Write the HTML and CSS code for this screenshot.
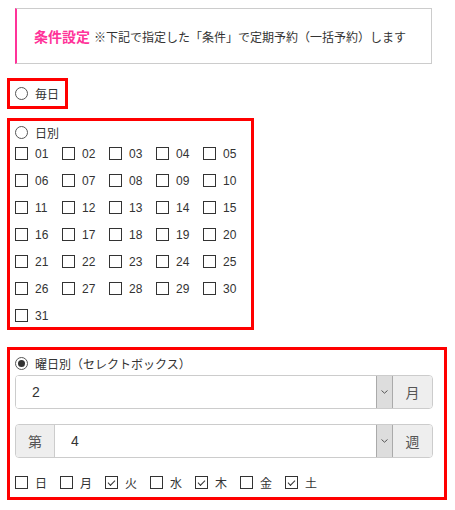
FILE: index.html
```html
<!DOCTYPE html>
<html lang="ja">
<head>
    <meta charset="UTF-8">
    <meta name="viewport" content="width=device-width, initial-scale=1.0">
    <title>条件設定</title>
    <link rel="stylesheet" href="styles.css">
</head>
<body>
    <div class="info-box">
        <span class="info-title">条件設定</span>
        <span class="info-text">※下記で指定した「条件」で定期予約（一括予約）します</span>
    </div>

    <div class="frame frame-daily">
        <label class="radio-line"><input type="radio" name="mode"> 毎日</label>
    </div>

    <div class="frame frame-days">
        <label class="radio-line"><input type="radio" name="mode"> 日別</label>
        <div class="day-grid">
            <label class="check"><input type="checkbox">01</label>
            <label class="check"><input type="checkbox">02</label>
            <label class="check"><input type="checkbox">03</label>
            <label class="check"><input type="checkbox">04</label>
            <label class="check"><input type="checkbox">05</label>
            <label class="check"><input type="checkbox">06</label>
            <label class="check"><input type="checkbox">07</label>
            <label class="check"><input type="checkbox">08</label>
            <label class="check"><input type="checkbox">09</label>
            <label class="check"><input type="checkbox">10</label>
            <label class="check"><input type="checkbox">11</label>
            <label class="check"><input type="checkbox">12</label>
            <label class="check"><input type="checkbox">13</label>
            <label class="check"><input type="checkbox">14</label>
            <label class="check"><input type="checkbox">15</label>
            <label class="check"><input type="checkbox">16</label>
            <label class="check"><input type="checkbox">17</label>
            <label class="check"><input type="checkbox">18</label>
            <label class="check"><input type="checkbox">19</label>
            <label class="check"><input type="checkbox">20</label>
            <label class="check"><input type="checkbox">21</label>
            <label class="check"><input type="checkbox">22</label>
            <label class="check"><input type="checkbox">23</label>
            <label class="check"><input type="checkbox">24</label>
            <label class="check"><input type="checkbox">25</label>
            <label class="check"><input type="checkbox">26</label>
            <label class="check"><input type="checkbox">27</label>
            <label class="check"><input type="checkbox">28</label>
            <label class="check"><input type="checkbox">29</label>
            <label class="check"><input type="checkbox">30</label>
            <label class="check"><input type="checkbox">31</label>
        </div>
    </div>

    <div class="frame frame-week">
        <label class="radio-line"><input type="radio" name="mode" checked> 曜日別（セレクトボックス）</label>

        <div class="input-group first">
            <div class="select-box">
                <select><option>2</option></select>
                <span class="arrow"><svg width="7" height="4" viewBox="0 0 7 4"><path d="M0.5 0.5 L3.5 3.2 L6.5 0.5" fill="none" stroke="#555" stroke-width="1"/></svg></span>
            </div>
            <span class="addon addon-right">月</span>
        </div>

        <div class="input-group second">
            <span class="addon addon-left">第</span>
            <div class="select-box">
                <select><option>4</option></select>
                <span class="arrow"><svg width="7" height="4" viewBox="0 0 7 4"><path d="M0.5 0.5 L3.5 3.2 L6.5 0.5" fill="none" stroke="#555" stroke-width="1"/></svg></span>
            </div>
            <span class="addon addon-right">週</span>
        </div>

        <div class="week-row">
            <label class="check week"><input type="checkbox">日</label>
            <label class="check week"><input type="checkbox">月</label>
            <label class="check week"><input type="checkbox" checked>火</label>
            <label class="check week"><input type="checkbox">水</label>
            <label class="check week"><input type="checkbox" checked>木</label>
            <label class="check week"><input type="checkbox">金</label>
            <label class="check week"><input type="checkbox" checked>土</label>
        </div>
    </div>
</body>
</html>
```

FILE: styles.css
```css
body {
    margin: 0;
    padding: 8px 8px 0 7px;
    font-family: "Liberation Sans", "Noto Sans CJK JP", sans-serif;
    font-size: 12px;
    color: #333;
    background: #fff;
}
.info-box {
    margin-left: 8px;
    width: 397px;
    height: 54px;
    border: 1px solid #ccc;
    border-left: 2px solid #f39;
    padding-left: 17px;
    display: flex;
    align-items: center;
    gap: 4px;
    margin-bottom: 14px;
}
.info-title {
    color: #f39;
    font-weight: bold;
    font-size: 14px;
}
.info-text {
    font-size: 12px;
    color: #333;
}
.frame {
    border: 3px solid #f00;
    box-sizing: border-box;
}
.frame-daily {
    width: 61px;
    height: 31px;
    padding: 0 5px;
    display: flex;
    align-items: center;
    margin-bottom: 9px;
}
.frame-days {
    width: 247px;
    height: 212px;
    padding: 2px 5px 5px;
    margin-bottom: 17px;
}
.frame-week {
    width: 440px;
    height: 153px;
    padding: 4px 11px 8px 5px;
}
.radio-line {
    display: flex;
    align-items: center;
    height: 18px;
    gap: 7px;
    font-size: 12px;
}
input[type="radio"] {
    appearance: none;
    margin: 0;
    width: 13px;
    height: 13px;
    border: 1px solid #555;
    border-radius: 50%;
    box-sizing: border-box;
    position: relative;
    background: #fff;
}
input[type="radio"]:checked::after {
    content: "";
    position: absolute;
    left: 2px;
    top: 2px;
    width: 7px;
    height: 7px;
    border-radius: 50%;
    background: #333;
}
.day-grid {
    margin-top: 6px;
    display: grid;
    grid-template-columns: repeat(5, 47px);
    grid-auto-rows: 13px;
    row-gap: 14px;
}
.check {
    display: flex;
    align-items: center;
    gap: 7px;
    height: 13px;
    font-size: 12px;
}
input[type="checkbox"] {
    appearance: none;
    margin: 0;
    width: 13px;
    height: 13px;
    border: 1px solid #333;
    box-sizing: border-box;
    background: #fff;
    position: relative;
    flex: none;
}
input[type="checkbox"]:checked::after {
    content: "";
    position: absolute;
    left: 2px;
    top: 1px;
    width: 6px;
    height: 3px;
    border-left: 1px solid #333;
    border-bottom: 1px solid #333;
    transform: translate(0, 2px) rotate(-45deg);
}
.input-group {
    display: flex;
    height: 34px;
    border: 1px solid #ccc;
    border-radius: 4px;
    box-sizing: border-box;
    overflow: hidden;
}
.input-group.first {
    margin-top: 3px;
}
.input-group.second {
    margin-top: 15px;
}
.select-box {
    flex: 1;
    display: flex;
    background: #fff;
}
.select-box select {
    appearance: none;
    flex: 1;
    border: none;
    background: #fff;
    font-family: "Liberation Sans", "Noto Sans CJK JP", sans-serif;
    font-size: 14px;
    color: #333;
    padding: 0 0 0 16px;
    outline: none;
}
.arrow {
    width: 17px;
    background: #ddd;
    border: 1px solid #aaa;
    box-sizing: border-box;
    display: flex;
    align-items: center;
    justify-content: center;
    margin: -1px 0;
}
.addon {
    width: 39px;
    background: #eee;
    display: flex;
    align-items: center;
    justify-content: center;
    font-size: 14px;
    color: #555;
}
.addon-left {
    border-right: 1px solid #ccc;
    width: 38px;
}
.week-row {
    display: flex;
    margin-top: 18px;
}
.check.week {
    width: 45px;
}
```
